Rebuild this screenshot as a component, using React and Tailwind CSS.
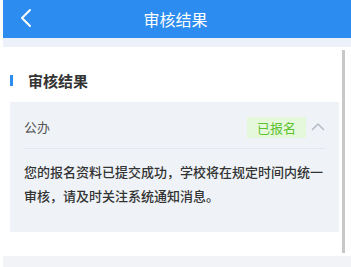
const ChevronLeft = () => (
  <svg width="14" height="20" viewBox="0 0 14 20" fill="none">
    <path d="M11 2 L3 10 L11 18" stroke="white" strokeWidth="2" strokeLinecap="round" strokeLinejoin="round" />
  </svg>
);

const ChevronUp = () => (
  <svg width="14" height="9" viewBox="0 0 14 9" fill="none">
    <path d="M1.5 7.5 L7 2 L12.5 7.5" stroke="#b5bcc6" strokeWidth="1.6" strokeLinecap="round" strokeLinejoin="round" />
  </svg>
);

export default function App() {
  return (
    <div
      className="w-[351px] h-[267px] bg-white overflow-hidden relative"
      style={{ fontFamily: '"Noto Sans CJK SC", "Noto Sans", sans-serif' }}
    >
      <div className="ml-[3px] flex flex-col h-full">
        <div className="h-[38px] bg-[#2d8cf0] flex items-center relative shrink-0">
          <div className="absolute left-[16px] top-[8px]">
            <ChevronLeft />
          </div>
          <div className="flex-1 text-center text-white text-[16px] leading-none pr-[3px]">审核结果</div>
        </div>
        <div className="h-[9px] bg-[#edf2fa] shrink-0" />
        <div className="flex-1 relative">
          <div className="w-[339px] pt-[24px]">
            <div className="flex items-center h-[18px]">
              <div className="w-[3px] h-[11px] bg-[#2d8cf0] ml-[7px]" />
              <div className="ml-[15px] text-[15px] font-bold text-[#333] leading-none">审核结果</div>
            </div>
            <div className="ml-[7px] mt-[13px] w-[329px] h-[130px] bg-[#eff3f8] px-[14px]">
              <div className="h-[47px] flex items-center border-b border-[#e3e8ef]">
                <div className="text-[13px] text-[#555] flex-1 pt-[4px]">公办</div>
                <div className="bg-[#e5f8dc] text-[#5cc230] text-[13px] leading-none px-[10px] py-[4px] mt-[4px]">已报名</div>
                <div className="ml-[5px] mr-0 mt-[2px]">
                  <ChevronUp />
                </div>
              </div>
              <div className="pt-[11px] text-[13px] leading-[24px] text-[#333] font-medium">
                您的报名资料已提交成功，学校将在规定时间内统一审核，请及时关注系统通知消息。
              </div>
            </div>
          </div>
          <div className="absolute left-[339px] top-[3px] w-[3px] h-[203px] bg-[#c8c8c8]" />
        </div>
        <div className="h-[11px] bg-[#f1f3f6] shrink-0" />
      </div>
    </div>
  );
}
